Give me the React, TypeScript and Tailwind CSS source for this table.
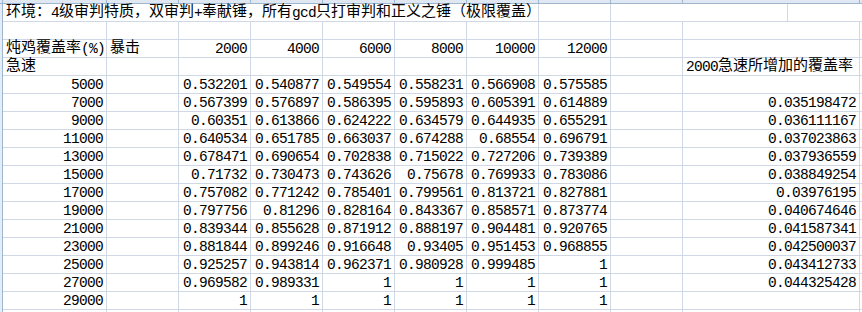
import React from 'react';

// column widths incl. right gridline: A, B..I, J
const W = ['w-[104px]', 'w-[72px]', 'w-[72px]', 'w-[72px]', 'w-[72px]', 'w-[72px]', 'w-[72px]', 'w-[72px]', 'w-[72px]', 'w-[177px]'];

const crit = ['2000', '4000', '6000', '8000', '10000', '12000'];

const data: [string, string[], string][] = [
  ['5000', ['0.532201', '0.540877', '0.549554', '0.558231', '0.566908', '0.575585'], ''],
  ['7000', ['0.567399', '0.576897', '0.586395', '0.595893', '0.605391', '0.614889'], '0.035198472'],
  ['9000', ['0.60351', '0.613866', '0.624222', '0.634579', '0.644935', '0.655291'], '0.036111167'],
  ['11000', ['0.640534', '0.651785', '0.663037', '0.674288', '0.68554', '0.696791'], '0.037023863'],
  ['13000', ['0.678471', '0.690654', '0.702838', '0.715022', '0.727206', '0.739389'], '0.037936559'],
  ['15000', ['0.71732', '0.730473', '0.743626', '0.75678', '0.769933', '0.783086'], '0.038849254'],
  ['17000', ['0.757082', '0.771242', '0.785401', '0.799561', '0.813721', '0.827881'], '0.03976195'],
  ['19000', ['0.797756', '0.81296', '0.828164', '0.843367', '0.858571', '0.873774'], '0.040674646'],
  ['21000', ['0.839344', '0.855628', '0.871912', '0.888197', '0.904481', '0.920765'], '0.041587341'],
  ['23000', ['0.881844', '0.899246', '0.916648', '0.93405', '0.951453', '0.968855'], '0.042500037'],
  ['25000', ['0.925257', '0.943814', '0.962371', '0.980928', '0.999485', '1'], '0.043412733'],
  ['27000', ['0.969582', '0.989331', '1', '1', '1', '1'], '0.044325428'],
  ['29000', ['1', '1', '1', '1', '1', '1'], ''],
];

// CJK runs in Noto, everything else in a narrow mono (SimSun-ish digits).
// The parent strut fixes the baseline so every cell sits at the same height.
function Txt({ s }: { s: string }) {
  const parts = s.split(/([\u2E80-\uFFFF]+)/).filter(Boolean);
  return (
    <span className="block h-[17px] font-['Liberation_Mono',monospace] text-[14.5px] leading-[17.3px] tracking-[-0.7px]">
      {parts.map((p, i) =>
        /[\u2E80-\uFFFF]/.test(p) ? (
          <span key={i} className="font-['Noto_Sans_CJK_SC',sans-serif] text-[15px] leading-[10px] tracking-normal">
            {p}
          </span>
        ) : (
          <span key={i} className="leading-[17px] align-[-0.5px]">
            {p}
          </span>
        )
      )}
    </span>
  );
}

function Cell({ w, s = '', right = false }: { w: string; s?: string; right?: boolean }) {
  return (
    <div
      className={`${w} shrink-0 h-full border-r border-b border-[#d0d7e5] flex items-end whitespace-nowrap ${
        right ? 'justify-end pr-[3px]' : 'pl-[3px]'
      }`}
    >
      {s && <Txt s={s} />}
    </div>
  );
}

function Row({ children }: { children: React.ReactNode }) {
  return (
    <div className="flex h-[18px]">
      <div className="w-[3px] shrink-0 bg-[#e4ecf7] border-r border-[#9eb6ce]" />
      {children}
      <div className="flex-1 border-b border-[#d0d7e5]" />
    </div>
  );
}

export default function App() {
  return (
    <div className="w-[862px] h-[312px] overflow-hidden bg-white text-black">
      {/* column header edge */}
      <div className="flex h-[4px]">
        <div className="w-[3px] shrink-0 bg-[#dfe7f2] border-r border-b border-[#9eb6ce]" />
        {W.map((w, i) => (
          <div key={i} className={`${w} shrink-0 bg-[#dfe7f2] border-r border-b border-[#9eb6ce]`} />
        ))}
        <div className="flex-1 bg-[#dfe7f2] border-b border-[#9eb6ce]" />
      </div>

      {/* title, spills over A..G */}
      <Row>
        <div className="w-[536px] shrink-0 h-full border-r border-b border-[#d0d7e5] flex items-end whitespace-nowrap pl-[3px]">
          <Txt s="环境：4级审判特质，双审判+奉献锤，所有gcd只打审判和正义之锤（极限覆盖）" />
        </div>
        <Cell w={W[8]} />
        <Cell w={W[9]} />
      </Row>

      <Row>
        {W.map((w, i) => (
          <Cell key={i} w={w} />
        ))}
      </Row>

      <Row>
        <Cell w={W[0]} s="炖鸡覆盖率(%)" />
        <Cell w={W[1]} s="暴击" />
        {crit.map((c, i) => (
          <Cell key={c} w={W[i + 2]} s={c} right />
        ))}
        <Cell w={W[8]} />
        <Cell w={W[9]} />
      </Row>

      <Row>
        <Cell w={W[0]} s="急速" />
        {W.slice(1, 9).map((w, i) => (
          <Cell key={i} w={w} />
        ))}
        <Cell w={W[9]} s="2000急速所增加的覆盖率" />
      </Row>

      {data.map(([haste, vals, inc]) => (
        <Row key={haste}>
          <Cell w={W[0]} s={haste} right />
          <Cell w={W[1]} />
          {vals.map((v, i) => (
            <Cell key={i} w={W[i + 2]} s={v} right />
          ))}
          <Cell w={W[8]} />
          <Cell w={W[9]} s={inc} right />
        </Row>
      ))}

      <Row>
        {W.map((w, i) => (
          <Cell key={i} w={w} />
        ))}
      </Row>
    </div>
  );
}
